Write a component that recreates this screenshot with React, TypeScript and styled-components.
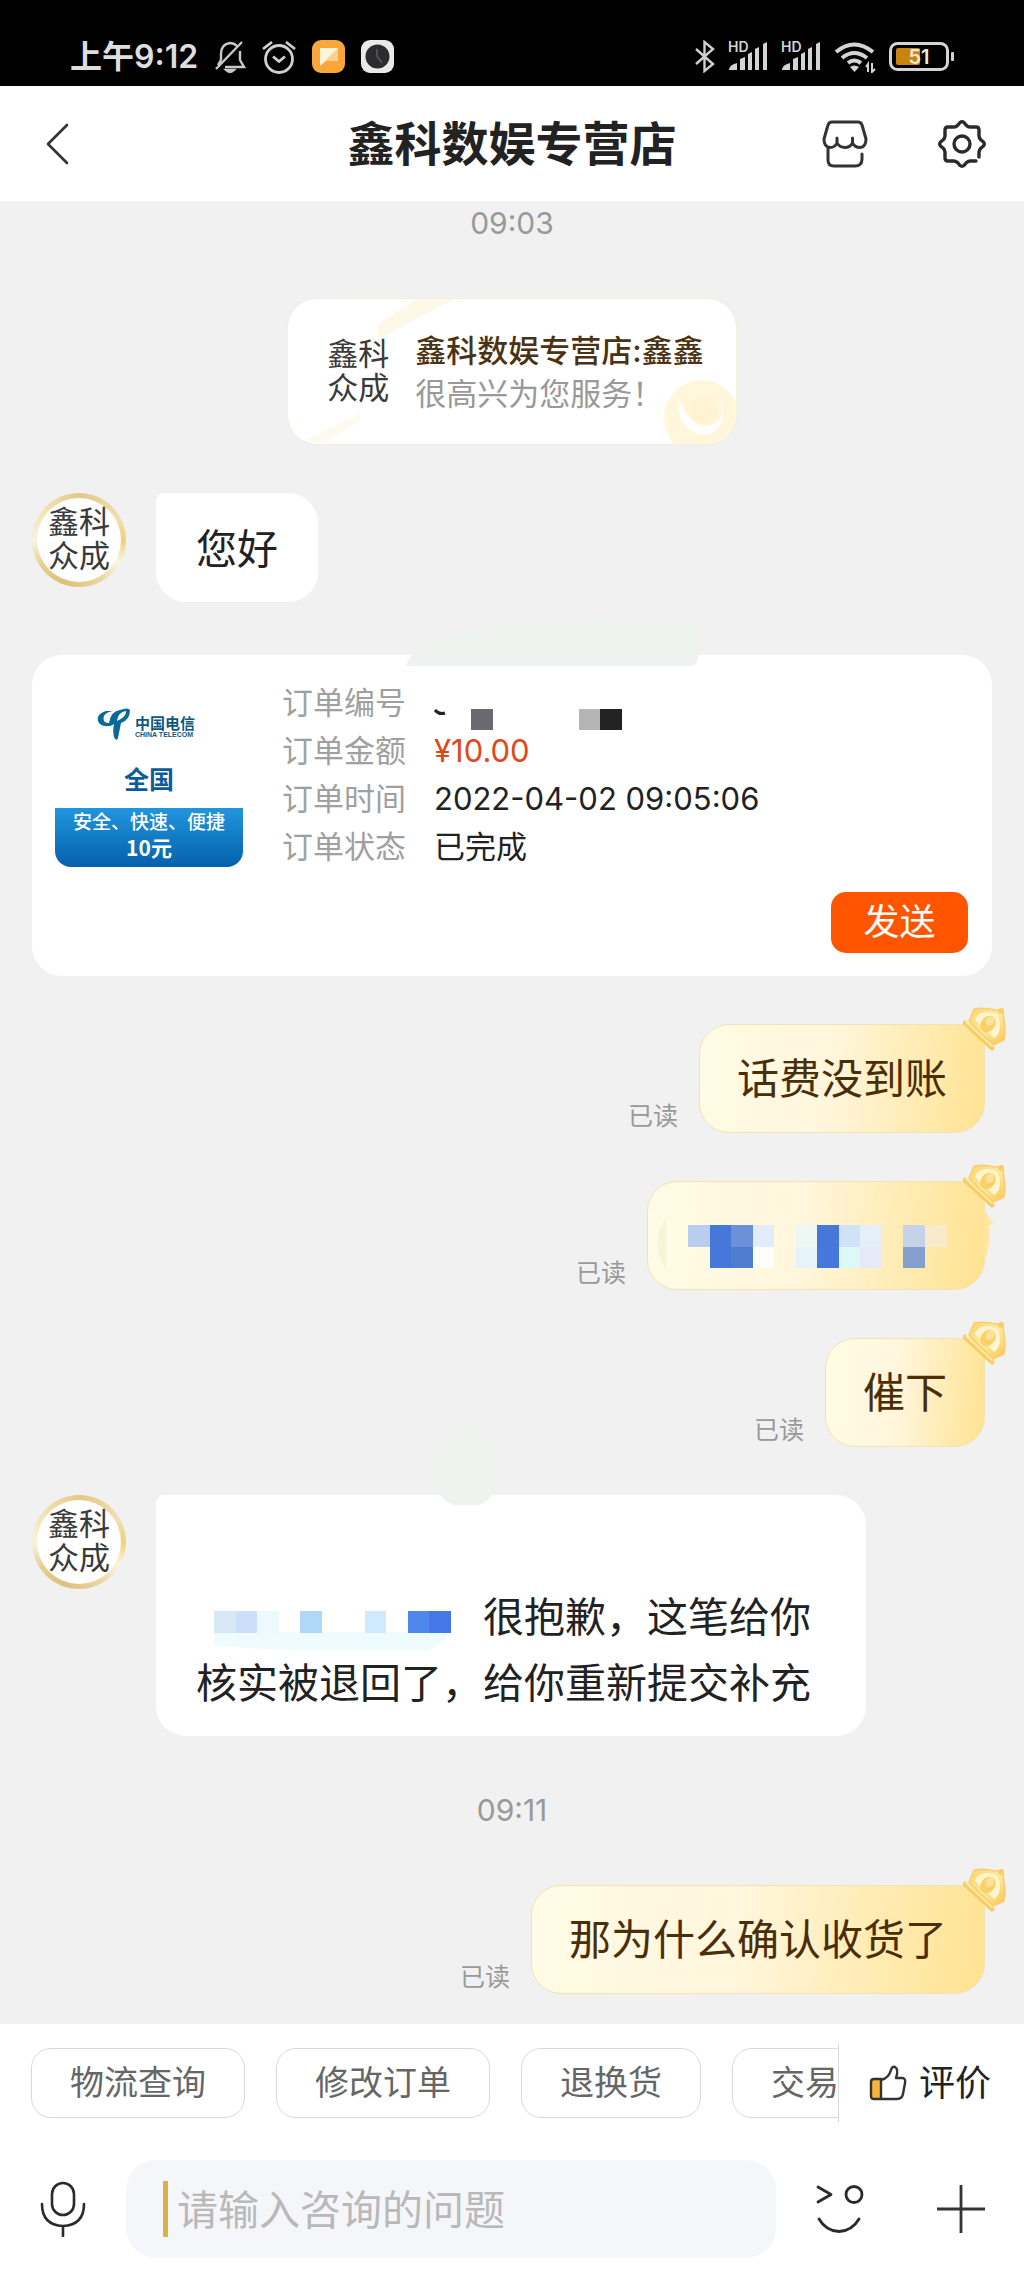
import React from "react";
import styled, { createGlobalStyle } from "styled-components";

const GlobalStyle = createGlobalStyle`
  *, *::before, *::after { box-sizing: border-box; }
  body {
    margin: 0;
    background: #f1f1f1;
    font-family: Inter, "Noto Sans CJK SC", sans-serif;
    color: #222;
  }
  button, input { font: inherit; color: inherit; }
`;

const Page = styled.div`
  display: flex;
  flex-direction: column;
  min-height: 100vh;
`;

/* ---------- status bar ---------- */

const StatusBar = styled.div`
  display: flex;
  justify-content: space-between;
  align-items: center;
  height: 86px;
  padding: 27px 69px 0 70px;
  background: #000;
  color: #dedede;
`;

const StatusGroup = styled.div<{ $gap: number }>`
  display: flex;
  align-items: center;
  gap: ${(p) => p.$gap}px;
`;

const Clock = styled.span`
  font-size: 32px;
  line-height: 40px;
  font-weight: 600;
  white-space: nowrap;
`;

/* ---------- header ---------- */

const Header = styled.header`
  display: grid;
  grid-template-columns: 1fr auto 1fr;
  align-items: center;
  height: 115px;
  padding: 0 38px;
  background: #fff;
  position: relative;
  z-index: 1;
`;

const Title = styled.h1`
  margin: 0;
  font-size: 47px;
  line-height: 56px;
  font-weight: 700;
`;

const HeaderActions = styled.div`
  display: flex;
  justify-content: flex-end;
  gap: 70px;
`;

const IconButton = styled.button`
  display: flex;
  justify-self: start;
  flex: none;
  padding: 0;
  border: 0;
  background: none;
`;

const BackButton = styled(IconButton)`
  padding: 0 8px;
`;

/* ---------- chat ---------- */

const Chat = styled.main`
  flex: 1;
  display: flex;
  flex-direction: column;
  gap: 48px;
  margin-top: -4px;
  padding: 0 32px 30px;
  background: #f1f1f1;
`;

const Time = styled.time`
  align-self: center;
  font-size: 30px;
  line-height: 53px;
  color: #999;
`;

const ServiceCard = styled.section`
  position: relative;
  align-self: center;
  display: flex;
  align-items: center;
  gap: 24px;
  height: 147px;
  padding: 0 32px 0 37px;
  border: 1px solid #f4eedc;
  border-radius: 30px;
  background: #fff;
  overflow: hidden;
`;

const ServiceDecor = styled.svg<{ $side: "left" | "right" }>`
  position: absolute;
  bottom: 0;
  ${(p) => p.$side}: 0;
`;

const ShopMark = styled.span`
  position: relative;
  flex: none;
  width: 66px;
  font-family: "Liberation Sans", "Noto Sans CJK SC", sans-serif;
  font-size: 31px;
  line-height: 34px;
  text-align: center;
  color: #3a3a3a;
`;

const ServiceText = styled.div`
  position: relative;
  font-size: 31px;
  line-height: 43px;
  color: #999;
`;

const ServiceName = styled.div`
  font-weight: 500;
  color: #4a3212;
`;

const Row = styled.div`
  display: flex;
  align-items: flex-start;
  gap: 30px;
`;

const Avatar = styled.div`
  flex: none;
  display: flex;
  align-items: center;
  justify-content: center;
  width: 94px;
  height: 94px;
  border: 5px solid transparent;
  border-radius: 50%;
  background:
    linear-gradient(#fff, #fff) padding-box,
    conic-gradient(#e3c987, #f0dfb2 60deg, #efd27a 90deg, #fbf6e4 120deg, #ead7a3 150deg, #ddc07a 200deg, #e6cf8f 235deg, #f8f2df 270deg, #f3e3b4 310deg, #e3c987) border-box;
`;

const Bubble = styled.div`
  position: relative;
  max-width: 710px;
  padding: 23px 40px 20px;
  border-radius: 8px 30px 30px 30px;
  background: #fff;
  font-size: 41px;
  line-height: 66px;
`;

const BlankLine = styled.div`
  height: 66px;
`;

const Mosaic = styled.svg`
  display: inline-block;
  margin: 0 32px 0 18px;
  vertical-align: top;
`;

const SentRow = styled.div`
  display: flex;
  justify-content: flex-end;
  align-items: flex-end;
  gap: 21px;
  padding-right: 7px;
`;

const Read = styled.span`
  font-size: 25px;
  line-height: 33px;
  color: #999;
`;

const SentBubble = styled.div`
  position: relative;
  display: flex;
  align-items: center;
  height: 109px;
  padding: 1px 37px 0;
  border: 1px solid #f1e3b2;
  border-radius: 30px 8px 30px 30px;
  background: linear-gradient(95deg, #fffbe4, #fff6dd 45%, #ffe8a6 85%, #ffe392);
  font-size: 42px;
  line-height: 66px;
  color: #4a2e05;
`;

const Badge = styled.svg`
  position: absolute;
  top: -18px;
  right: -23px;
`;

const Smear = styled.svg<{ $left: number; $top: number }>`
  position: absolute;
  left: ${(p) => p.$left}px;
  top: ${(p) => p.$top}px;
`;

/* ---------- order card ---------- */

const OrderCard = styled.section`
  position: relative;
  display: flex;
  flex-direction: column;
  justify-content: space-between;
  margin-top: 5px;
  padding: 24px 24px 23px 23px;
  height: 321px;
  border-radius: 30px;
  background: #fff;
`;

const OrderBody = styled.div`
  display: flex;
  gap: 39px;
`;

const Product = styled.div`
  display: flex;
  flex-direction: column;
  align-items: center;
  width: 188px;
  height: 188px;
  padding-top: 28px;
  border-radius: 16px;
  overflow: hidden;
  background: #fff;
`;

const Region = styled.div`
  flex: 1;
  padding-top: 17px;
  font-size: 25px;
  line-height: 40px;
  font-weight: 700;
  color: #0c5c9c;
`;

const Promo = styled.div`
  align-self: stretch;
  height: 59px;
  padding-top: 2px;
  background: linear-gradient(#2196dc, #0560ad);
  color: #fff;
  text-align: center;
  font-size: 19px;
  line-height: 25px;
  font-weight: 500;
  white-space: nowrap;
`;

const Price = styled.div`
  font-family: "Noto Sans CJK SC", sans-serif;
  font-size: 21px;
  font-weight: 700;
`;

const Details = styled.dl`
  display: grid;
  grid-template-columns: auto 1fr;
  column-gap: 28px;
  grid-auto-rows: 48px;
  margin: 0;
  font-size: 31px;
  line-height: 48px;
`;

const Label = styled.dt`
  color: #a0a0a0;
`;

const Value = styled.dd<{ $price?: boolean }>`
  margin: 0;
  color: ${(p) => (p.$price ? "#e0481c" : "#222")};
`;

const HiddenNumber = styled.svg`
  display: block;
`;

const SendButton = styled.button`
  align-self: flex-end;
  width: 137px;
  height: 61px;
  padding: 0;
  border: 0;
  border-radius: 15px;
  background: #ff5500;
  color: #fff;
  font-size: 36px;
  line-height: 61px;
`;

/* ---------- footer ---------- */

const Footer = styled.footer`
  padding-bottom: 18px;
  background: #fff;
`;

const QuickRow = styled.div`
  display: flex;
  align-items: center;
  padding: 20px 33px 0 31px;
`;

const Chips = styled.div`
  flex: 1;
  min-width: 0;
  display: flex;
  align-items: center;
  gap: 31px;
  height: 78px;
  overflow: hidden;
  border-right: 1px solid #d8d8d8;
`;

const Chip = styled.button`
  flex: none;
  height: 70px;
  padding: 0 38px;
  border: 1px solid #d9d9d9;
  border-radius: 20px;
  background: #fff;
  font-size: 34px;
  line-height: 60px;
  color: #666;
`;

const RateButton = styled.button`
  display: flex;
  align-items: center;
  gap: 12px;
  padding: 0 0 0 30px;
  border: 0;
  background: none;
  font-size: 36px;
  line-height: 48px;
`;

const InputRow = styled.form`
  display: flex;
  align-items: center;
  gap: 40px;
  padding: 38px 38px 0 40px;
`;

const InputBox = styled.label`
  flex: 1;
  min-width: 0;
  display: flex;
  align-items: center;
  gap: 9px;
  height: 98px;
  padding: 0 36px 0 37px;
  border-radius: 30px;
  background: #f5f6fa;
`;

const Caret = styled.span`
  flex: none;
  width: 5px;
  height: 56px;
  background: #dcb044;
`;

const Field = styled.input`
  flex: 1;
  min-width: 0;
  height: 66px;
  padding: 2px 0 0;
  border: 0;
  outline: 0;
  background: none;
  font-size: 41px;
  &::placeholder { color: #b9b9b9; opacity: 1; }
`;

const InputActions = styled.div`
  display: flex;
  align-items: center;
  gap: 72px;
`;

/* ---------- drawings ---------- */

const Signal = () => (
  <svg width="40" height="40" viewBox="0 -4 40 40" fill="#d4d4d4" aria-hidden="true">
    <text x="0" y="11" fontSize="14" fontWeight="600" fontFamily="Inter, sans-serif">HD</text>
    <path d="M1 29q0-5 8-7v7zM12 18l5-2v13h-5zM20 13l4-2v18h-4zM27 8l4-2v23h-4zM35 3l4-2v28h-4z" />
  </svg>
);

const Crown = () => (
  <Badge width="44" height="44" viewBox="0 0 44 44" aria-hidden="true">
    <defs>
      <linearGradient id="gold" x1="0" y1="0" x2="1" y2="1">
        <stop offset="0" stopColor="#fbd368" />
        <stop offset="0.5" stopColor="#ffe9a4" />
        <stop offset="1" stopColor="#f8c44f" />
      </linearGradient>
    </defs>
    <path d="M6 14L11 2Q21 0 33 3L40 3L41 14Q43 24 41 33L30 38Z" fill="url(#gold)" stroke="#f7cf6c" strokeWidth="1.5" strokeLinejoin="round" />
    <path d="M12 13Q14 5 25 5Q37 6 37 18Q37 28 31 31Z" fill="#fff5cf" />
    <ellipse cx="25" cy="17" rx="7" ry="9" fill="#fad067" transform="rotate(38 25 17)" />
    <ellipse cx="27" cy="14" rx="4" ry="5" fill="#fde29a" transform="rotate(38 27 14)" />
    <circle cx="38" cy="4" r="3" fill="#f9ce62" />
    <path d="M2 16L29 41" stroke="#f8cd62" strokeWidth="5" strokeLinecap="round" />
    <path d="M3 15L29 39" stroke="#ffefb4" strokeWidth="1.5" strokeLinecap="round" />
  </Badge>
);

type Cell = [col: number, row: number, fill: string];

const CELL = 21.5;

const Cells = ({ cells }: { cells: Cell[] }) => (
  <>
    {cells.map(([c, r, fill]) => (
      <rect key={`${c}-${r}`} x={c * CELL} y={r * CELL} width={CELL} height={CELL} fill={fill} shapeRendering="crispEdges" />
    ))}
  </>
);

const sentCells: Cell[] = [
  [0, 0, "#b9cdee"], [1, 0, "#4678da"], [1, 1, "#4678da"],
  [2, 0, "#6b92d6"], [2, 1, "#4f7dcd"], [3, 0, "#e2ebfa"], [3, 1, "#fcfefa"],
  [5, 0, "#eef8f3"], [5, 1, "#e4f4f8"], [6, 0, "#4678dc"], [6, 1, "#4678dc"],
  [7, 0, "#cfe2f8"], [7, 1, "#dcf9f8"], [8, 0, "#e5eff7"], [8, 1, "#e6e9f6"],
  [10, 0, "#c5d2e8"], [10, 1, "#829fcf"], [11, 0, "#f9ebca"], [12, 0, "#f8e8c2"],
];

const replyCells: Cell[] = [
  [0, 0, "#d6e9f4"], [1, 0, "#cbdffa"], [2, 0, "#ecf9fe"], [4, 0, "#b0d7f8"],
  [7, 0, "#d0e9fc"], [9, 0, "#4f88ec"], [10, 0, "#4677e8"],
];

const ShopAvatar = () => (
  <Avatar>
    <ShopMark>鑫科<br />众成</ShopMark>
  </Avatar>
);

const Sent = ({ children }: { children: React.ReactNode }) => (
  <SentRow>
    <Read>已读</Read>
    <SentBubble>
      {children}
      <Crown />
    </SentBubble>
  </SentRow>
);

export default function App() {
  return (
    <Page>
      <GlobalStyle />
      <StatusBar>
        <StatusGroup $gap={16}>
          <Clock>上午9:12</Clock>
          <svg width="32" height="34" viewBox="0 0 32 34" fill="none" stroke="#c8c8c8" strokeWidth="2.4" aria-hidden="true">
            <path d="M23 6Q20 3 16 3Q7 4 7 14V20L4 25M26 11V20L30 27H11M2 29L28 2" />
            <path d="M12 30Q16 34 20 30Z" fill="#c8c8c8" />
          </svg>
          <svg width="34" height="34" viewBox="0 0 34 34" fill="none" stroke="#d0d0d0" strokeWidth="2.8" aria-hidden="true">
            <circle cx="17" cy="19" r="13.5" />
            <path d="M11 16.5L17 21.5L23 16.5M1 9L10 2M33 9L24 2" />
          </svg>
          <svg width="33" height="33" viewBox="0 0 33 33" aria-hidden="true">
            <rect width="33" height="33" rx="9" fill="#f9a63a" />
            <path d="M8 8H26V21H14L8 26Z" fill="#fff3dc" />
            <path d="M26 8V21H14L8 26Z" fill="#fbd192" />
          </svg>
          <svg width="33" height="33" viewBox="0 0 33 33" aria-hidden="true">
            <rect width="33" height="33" rx="9" fill="#e9e9e9" />
            <circle cx="16.5" cy="16.5" r="12" fill="#2c2c2e" />
            <path d="M16 9V16L21 23" fill="none" stroke="#5b5b5b" strokeWidth="1.5" />
          </svg>
        </StatusGroup>
        <StatusGroup $gap={13}>
          <svg width="20" height="33" viewBox="0 0 20 33" fill="none" stroke="#cfcfcf" strokeWidth="2.4" aria-hidden="true">
            <path d="M1 9L18 24L9.5 31V2L18 9L1 24" />
          </svg>
          <Signal />
          <Signal />
          <svg width="42" height="32" viewBox="0 0 42 32" fill="none" stroke="#d4d4d4" strokeWidth="4" aria-hidden="true">
            <path d="M2 11Q20-4 39 11M8 17Q20 7 33 17M14 22Q20 17 27 22" />
            <path d="M16 26Q20 23 25 26L20.5 31Z" fill="#d4d4d4" stroke="none" />
            <path d="M34 31V23L32 26M38 22V31L41 28" strokeWidth="2" />
          </svg>
          <svg width="66" height="29" viewBox="0 0 66 29" aria-hidden="true">
            <rect x="1.5" y="1.5" width="57" height="26" rx="7" fill="none" stroke="#d4d4d4" strokeWidth="3" />
            <rect x="7" y="6" width="24" height="17" rx="2" fill="#c98410" />
            <rect x="62" y="10" width="3" height="9" rx="1" fill="#d4d4d4" />
            <text x="30" y="22" textAnchor="middle" fontSize="20" fontWeight="600" fontFamily="Inter, sans-serif" fill="#f4ead4">51</text>
          </svg>
        </StatusGroup>
      </StatusBar>

      <Header>
        <BackButton aria-label="返回">
          <svg width="24" height="42" viewBox="0 0 24 42" fill="none" stroke="#333" strokeWidth="2.6" strokeLinecap="round" strokeLinejoin="round">
            <path d="M21 2L2 21L21 40" />
          </svg>
        </BackButton>
        <Title>鑫科数娱专营店</Title>
        <HeaderActions>
          <IconButton aria-label="店铺">
            <svg width="46" height="48" viewBox="0 0 46 48" fill="none" stroke="#333" strokeWidth="3" strokeLinecap="round" strokeLinejoin="round">
              <path d="M10 2H36Q39 2 40 5L44 19Q44 27 38 27.5Q33 27.5 30.5 23V18V23Q28 27.5 23 27.5Q18 27.5 15 23V18V23Q13 27.5 8 27.5Q2 27 2 19L6 5Q7 2 10 2Z" />
              <path d="M6 29V40Q6 46 12 46H33Q40 46 40 39V34" />
            </svg>
          </IconButton>
          <IconButton aria-label="设置">
            <svg width="48" height="48" viewBox="0 0 48 48" fill="none" stroke="#2a2a2a" strokeWidth="3.4" strokeLinecap="round" strokeLinejoin="round">
              <path d="M38 41H32Q30 41 28 43L26 45.5Q24 47 22 45.5L20 43Q18 41 16 41H10Q7 41 7 38V32Q7 30 5 28L2.5 26Q1 24 2.5 22L5 20Q7 18 7 16V10Q7 7 10 7H16Q18 7 20 5L22 2.5Q24 1 26 2.5L28 5Q30 7 32 7H38Q41 7 41 10V16Q41 18 43 20L45.5 22Q47 24 45.5 26L43 28Q41 30 41 32V37" />
              <circle cx="24" cy="24" r="8" />
            </svg>
          </IconButton>
        </HeaderActions>
      </Header>

      <Chat>
        <Time>09:03</Time>

        <ServiceCard>
          <ServiceDecor $side="left" width="180" height="147" viewBox="0 0 180 147" aria-hidden="true">
            <path d="M90 28L130 0H170L90 42Z" fill="#fdf8e8" />
            <path d="M18 143L72 116V124L34 147Z" fill="#fdfaf0" />
          </ServiceDecor>
          <ServiceDecor $side="right" width="76" height="64" viewBox="0 0 76 64" aria-hidden="true">
            <circle cx="42" cy="38" r="38" fill="#fff6dc" />
            <path d="M20 20Q16 40 30 50Q46 60 58 48Q68 34 58 14Q68 36 54 44Q40 50 30 38Q22 30 20 20Z" fill="#fff" />
            <circle cx="43" cy="30" r="14" fill="#fff3d2" />
          </ServiceDecor>
          <ShopMark>鑫科<br />众成</ShopMark>
          <ServiceText>
            <ServiceName>鑫科数娱专营店:鑫鑫</ServiceName>
            <div>很高兴为您服务！</div>
          </ServiceText>
        </ServiceCard>

        <Row>
          <ShopAvatar />
          <Bubble>您好</Bubble>
        </Row>

        <OrderCard>
          <Smear $left={374} $top={-42} width="294" height="53" viewBox="0 0 294 53" aria-hidden="true">
            <path d="M28 26Q150-4 292 12V46Q291 53 284 53H0Q4 38 28 26Z" fill="#eef3ef" />
          </Smear>
          <OrderBody>
            <Product>
              <svg width="104" height="36" viewBox="0 0 104 36" aria-hidden="true">
                <path d="M9 4Q-1 7 1 14Q3 20 12 19Q15 19 17 17Q15 27 18 32Q20 34 21 31L24 16Q33 13 33 3Q31 0 23 3Q14 4 12 16Q5 16 7 9Q9 5 16 4ZM20 14Q21 5 29 4Q30 9 20 14Z" fill="#086a99" />
                <text x="38" y="22" fontSize="15" fontWeight="700" fontFamily="Noto Sans CJK SC, sans-serif" fill="#12577d">中国电信</text>
                <text x="38" y="30" fontSize="7" fontWeight="700" fontFamily="Liberation Sans, sans-serif" fill="#12577d">CHINA TELECOM</text>
              </svg>
              <Region>全国</Region>
              <Promo>
                安全、快速、便捷
                <Price>10元</Price>
              </Promo>
            </Product>
            <Details>
              <Label>订单编号</Label>
              <Value>
                <HiddenNumber width="190" height="48" viewBox="0 0 190 48" overflow="visible" aria-label="已隐藏">
                  <path d="M1 31Q5 36 11 34" fill="none" stroke="#222" strokeWidth="3" />
                  <rect x="37" y="30" width="22" height="21" fill="#6c6870" />
                  <rect x="145" y="30" width="21" height="21" fill="#b5b5b5" />
                  <rect x="166" y="30" width="22" height="21" fill="#232323" />
                </HiddenNumber>
              </Value>
              <Label>订单金额</Label>
              <Value $price>¥10.00</Value>
              <Label>订单时间</Label>
              <Value>2022-04-02 09:05:06</Value>
              <Label>订单状态</Label>
              <Value>已完成</Value>
            </Details>
          </OrderBody>
          <SendButton>发送</SendButton>
        </OrderCard>

        <Sent>话费没到账</Sent>
        <Sent>
          <Smear $left={5} $top={30} width="20" height="60" viewBox="0 0 20 60" aria-hidden="true">
            <path d="M13 6Q-5 32 13 57Z" fill="#f7f5d8" />
          </Smear>
          <svg width="262" height="63" viewBox="-3 -20 262 63" aria-hidden="true">
            <Cells cells={sentCells} />
          </svg>
          <Smear $left={334} $top={28} width="14" height="54" viewBox="0 0 14 54" aria-hidden="true">
            <path d="M2 0L12 14L7 15Q9 36 2 54Z" fill="#ffe6a2" />
          </Smear>
        </Sent>
        <Sent>催下</Sent>

        <Row>
          <ShopAvatar />
          <Bubble>
            <Smear $left={276} $top={-70} width="66" height="80" viewBox="0 0 66 80" aria-hidden="true">
              <path d="M2 24Q8 2 33 1Q58 2 64 24V58Q58 80 44 80H22Q8 76 2 58Z" fill="#eef3ef" />
            </Smear>
            <BlankLine />
            <Mosaic width="237" height="66" viewBox="0 -27 237 66" aria-hidden="true">
              <path d="M0 21H236Q228 34 214 39Q100 42 0 35Z" fill="#effcff" />
              <Cells cells={replyCells} />
            </Mosaic>
            很抱歉，这笔给你核实被退回了，给你重新提交补充
          </Bubble>
        </Row>

        <Time>09:11</Time>
        <Sent>那为什么确认收货了</Sent>
      </Chat>

      <Footer>
        <QuickRow>
          <Chips>
            <Chip>物流查询</Chip>
            <Chip>修改订单</Chip>
            <Chip>退换货</Chip>
            <Chip>交易</Chip>
          </Chips>
          <RateButton>
            <svg width="38" height="36" viewBox="0 0 38 36" aria-hidden="true">
              <path d="M3 14H12V34H5Q2 34 2 31V15Z" fill="#f5b53c" />
              <path d="M12 14V34H5Q2 34 2 31V17Q2 14 5 14ZM12 15Q20 13 22 5Q23 1 26 2Q30 4 27 13H33Q37 13 36 18L34 29Q33 34 28 34H12" fill="none" stroke="#333" strokeWidth="2.4" strokeLinejoin="round" />
            </svg>
            评价
          </RateButton>
        </QuickRow>
        <InputRow onSubmit={(e) => e.preventDefault()}>
          <IconButton type="button" aria-label="语音">
            <svg width="46" height="56" viewBox="0 0 46 56" fill="none" stroke="#2a2a2a" strokeWidth="2.6" strokeLinecap="round">
              <rect x="12" y="2" width="22" height="32" rx="11" />
              <path d="M2 23Q2 44 23 45Q44 44 44 23M23 45V55" />
            </svg>
          </IconButton>
          <InputBox>
            <Caret />
            <Field aria-label="咨询内容" placeholder="请输入咨询的问题" />
          </InputBox>
          <InputActions>
            <IconButton type="button" aria-label="表情">
              <svg width="48" height="50" viewBox="0 0 48 50" fill="none" stroke="#2a2a2a" strokeWidth="2.8" strokeLinecap="round" strokeLinejoin="round">
                <path d="M2 3L15 10.5L2 18M3 35Q10 47 23 47.5Q36 47 43 35" />
                <circle cx="38" cy="10.5" r="8" />
              </svg>
            </IconButton>
            <IconButton type="button" aria-label="更多">
              <svg width="50" height="50" viewBox="0 0 50 50" fill="none" stroke="#333" strokeWidth="2.8">
                <path d="M25 1V49M1 25H49" />
              </svg>
            </IconButton>
          </InputActions>
        </InputRow>
      </Footer>
    </Page>
  );
}
